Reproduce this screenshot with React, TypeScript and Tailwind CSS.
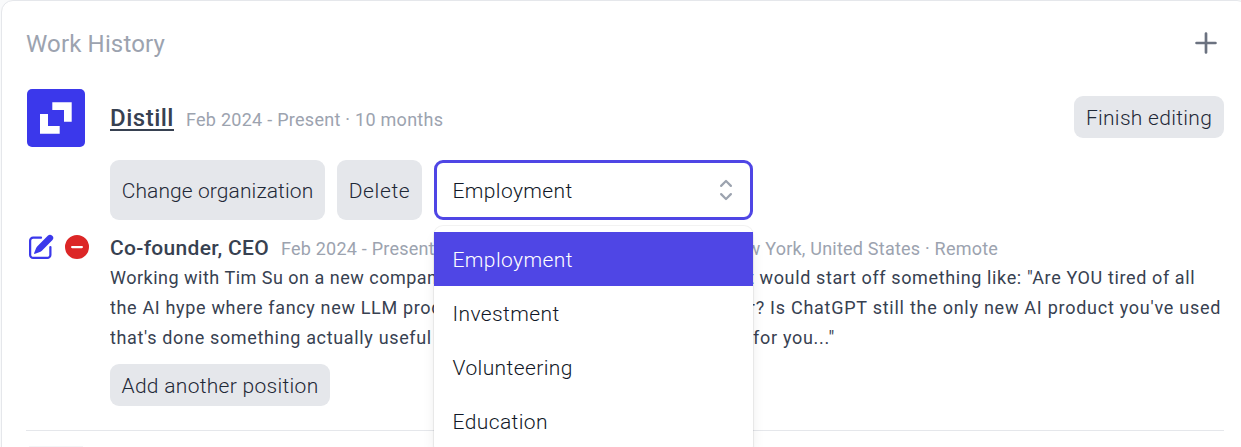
import { useState } from "react"
import clsx from "clsx"
import { HiMiniChevronUpDown, HiMiniMinusCircle, HiMiniPencilSquare, HiMiniPlus } from "react-icons/hi2"

const types = ["Employment", "Investment", "Volunteering", "Education"]

const lines = [
  {
    start: "Working with Tim Su on a new company. If we were to run ads,",
    end: 'it would start off something like: "Are YOU tired of all',
    startClass: "w-[633px] tracking-[0.5px]",
    endClass: "tracking-[0.62px]",
  },
  {
    start: "the AI hype where fancy new LLM products launch faster than",
    end: "ever? Is ChatGPT still the only new AI product you've used",
    startClass: "w-[609px]",
    endClass: "tracking-[0.74px]",
  },
  {
    start: "that's done something actually useful for you? Then this is",
    end: 'for you..."',
    startClass: "w-[643px]",
    endClass: "tracking-[0.7px]",
  },
]

function DistillLogo() {
  return (
    <svg viewBox="0 0 58 58" className="size-[58px] rounded-[5px] bg-[#3b38eb]">
      <path d="M25.3 13.3h19.4v19.4H37V21H25.3zM13 25h8v12h11.7v7.7H13z" fill="#fff" />
    </svg>
  )
}

function TypeSelect() {
  const [selected, setSelected] = useState("Employment")

  return (
    <div className="relative w-[319px]">
      <button className="flex h-[60px] w-full items-center justify-between rounded-[9px] border-3 border-[#4f46e5] bg-white pr-[9px] pl-[15.5px] text-[#111827]">
        <span className="pt-[3px] tracking-[0.38px]">{selected}</span>
        <HiMiniChevronUpDown className="size-[30px] text-[#9ca3af]" />
      </button>
      <ul className="absolute top-[66px] left-0 z-10 w-full rounded-[9px] bg-white py-1.5 shadow-lg ring-1 ring-black/5">
        {types.map((type) => (
          <li
            key={type}
            onClick={() => setSelected(type)}
            className={clsx(
              "flex h-[54px] items-center pt-[3px] pl-[18.5px] tracking-[0.4px]",
              type === selected ? "bg-[#4f46e5] text-white" : "text-[#111827]"
            )}
          >
            {type}
          </li>
        ))}
      </ul>
    </div>
  )
}

export default function App() {
  return (
    <div className="h-[447px] w-full overflow-hidden bg-[#f9fafb] pl-px font-['Roboto',sans-serif] text-[21px] font-light">
      <div className="h-[480px] w-[1248px] rounded-xl border border-[#e5e7eb] bg-white px-6">
        <div className="mb-1 flex h-[84px] items-center justify-between">
          <h2 className="pt-0.5 text-2xl font-normal tracking-[0.15px] text-[#9ca3af]">Work History</h2>
          <HiMiniPlus className="size-9 text-[#6b7280]" />
        </div>

        <div className="flex h-[58px] items-center pl-px">
          <DistillLogo />
          <div className="ml-[25px] flex items-baseline gap-3">
            <a className="text-2xl font-medium tracking-[0.5px] text-[#374151] underline decoration-2 underline-offset-3">Distill</a>
            <span className="text-lg font-normal tracking-[0.27px] text-[#9ca3af]">Feb 2024 - Present · 10 months</span>
          </div>
          <button className="mb-0.5 ml-auto h-[42px] w-[150px] rounded-[9px] bg-[#e5e7eb] pt-[3px] tracking-[0.3px] text-[#1f2937]">Finish editing</button>
        </div>

        <div className="mt-[13px] flex gap-3 pl-[84px] text-[#1f2937]">
          <button className="h-[60px] w-[215px] rounded-[9px] bg-[#e5e7eb] pt-[3px] tracking-[0.1px] whitespace-nowrap">Change organization</button>
          <button className="h-[60px] w-[85px] rounded-[9px] bg-[#e5e7eb] pt-[3px] tracking-[0.65px]">Delete</button>
          <TypeSelect />
        </div>

        <div className="mt-3 flex h-[30px] items-center">
          <HiMiniPencilSquare className="size-[30px] text-[#3b38eb]" />
          <HiMiniMinusCircle className="ml-1.5 size-[30px] text-[#dc2626]" />
          <div className="ml-[18px] flex items-baseline gap-3 pt-[3px] whitespace-nowrap">
            <h3 className="font-medium tracking-[0.3px] text-[#374151]">Co-founder, CEO</h3>
            <div className="flex text-lg font-normal tracking-[0.22px] text-[#9ca3af]">
              <span className="w-[443px]">Feb 2024 - Present · 10 months · Full-time ·</span>
              <span>New York, United States · Remote</span>
            </div>
          </div>
        </div>

        <div className="pt-px pl-[84px] text-lg/[30px] font-normal tracking-[0.66px] text-[#374151]">
          {lines.map((line) => (
            <p key={line.start} className="flex whitespace-nowrap">
              <span className={clsx("overflow-hidden", line.startClass)}>{line.start}</span>
              <span className={line.endClass}>{line.end}</span>
            </p>
          ))}
        </div>

        <div className="mt-[11px] border-b border-[#e5e7eb] pb-6 pl-[84px]">
          <button className="h-[42px] w-[220px] rounded-[9px] bg-[#e5e7eb] pt-[3px] tracking-[0.3px] text-[#1f2937]">Add another position</button>
        </div>
        <div className="mt-[15px] ml-[3px] h-[58px] w-[54px] bg-[#f3f4f6]" />
      </div>
    </div>
  )
}
